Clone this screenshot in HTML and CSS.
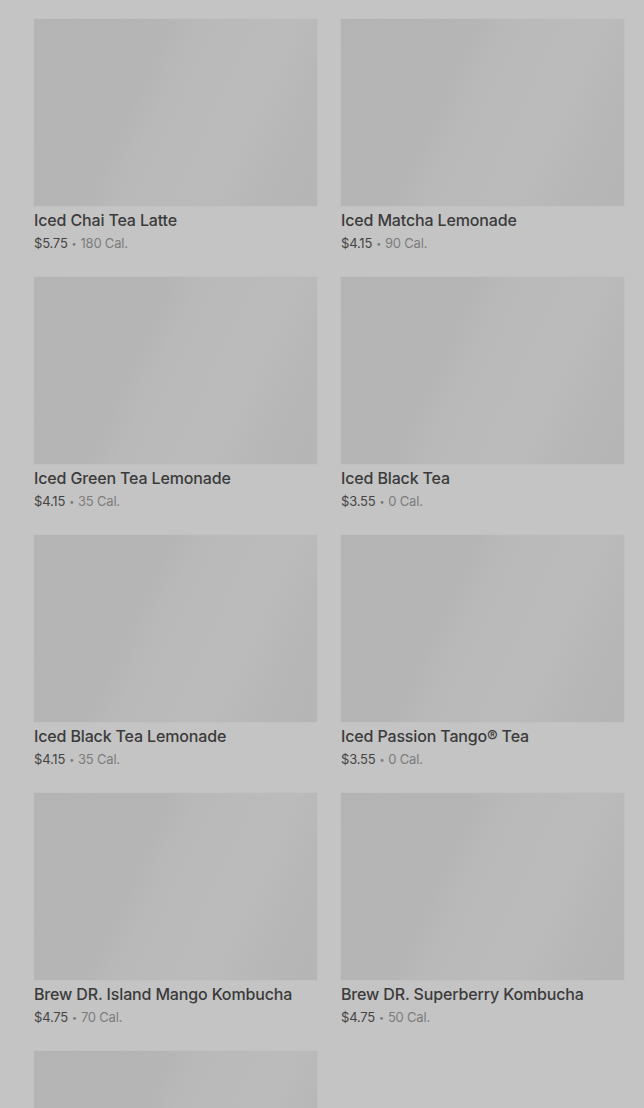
FILE: index.html
```html
<!DOCTYPE html>
<html>
<head>
<meta charset="utf-8">
<link rel="stylesheet" href="styles.css">
</head>
<body>
<div class="grid">
  <div class="card"><div class="thumb"></div><div class="title">Iced Chai Tea Latte</div><div class="meta"><span class="price">$5.75</span><span class="dot">•</span><span>180 Cal.</span></div></div>
  <div class="card"><div class="thumb"></div><div class="title">Iced Matcha Lemonade</div><div class="meta"><span class="price">$4.15</span><span class="dot">•</span><span>90 Cal.</span></div></div>
  <div class="card"><div class="thumb"></div><div class="title">Iced Green Tea Lemonade</div><div class="meta"><span class="price">$4.15</span><span class="dot">•</span><span>35 Cal.</span></div></div>
  <div class="card"><div class="thumb"></div><div class="title">Iced Black Tea</div><div class="meta"><span class="price">$3.55</span><span class="dot">•</span><span>0 Cal.</span></div></div>
  <div class="card"><div class="thumb"></div><div class="title">Iced Black Tea Lemonade</div><div class="meta"><span class="price">$4.15</span><span class="dot">•</span><span>35 Cal.</span></div></div>
  <div class="card"><div class="thumb"></div><div class="title">Iced Passion Tango® Tea</div><div class="meta"><span class="price">$3.55</span><span class="dot">•</span><span>0 Cal.</span></div></div>
  <div class="card"><div class="thumb"></div><div class="title">Brew DR. Island Mango Kombucha</div><div class="meta"><span class="price">$4.75</span><span class="dot">•</span><span>70 Cal.</span></div></div>
  <div class="card"><div class="thumb"></div><div class="title">Brew DR. Superberry Kombucha</div><div class="meta"><span class="price">$4.75</span><span class="dot">•</span><span>50 Cal.</span></div></div>
  <div class="card"><div class="thumb"></div><div class="title">&nbsp;</div><div class="meta">&nbsp;</div></div>
</div>
</body>
</html>
```

FILE: styles.css
```css
html, body {
  margin: 0;
  padding: 0;
  background: #c4c4c4;
  height: 1108px;
  overflow: hidden;
}
body {
  font-family: Inter, "Noto Sans", sans-serif;
}
.grid {
  display: grid;
  grid-template-columns: 283px 283px;
  column-gap: 24px;
  row-gap: 24px;
  padding: 19px 20px 0 34px;
}
.thumb {
  height: 187px;
  background: linear-gradient(115deg, #b4b4b4 0%, #b5b5b5 36%, #b9b9b9 46%, #bbbbbb 70%, #b7b7b7 84%, #b5b5b5 100%);
  box-shadow: 0 0 0 1px #c1c1c1;
}
.title {
  margin-top: 4px;
  font-size: 16px;
  line-height: 20px;
  font-weight: 500;
  color: #3b3b3b;
  letter-spacing: -0.15px;
}
.meta {
  margin-top: 3px;
  height: 20px;
  font-size: 13px;
  line-height: 20px;
  color: #7c7c7c;
  letter-spacing: -0.2px;
}
.price {
  color: #444444;
}
.dot {
  font-size: 9px;
  line-height: 1;
  margin: 0 4px;
  vertical-align: 1px;
}
```
